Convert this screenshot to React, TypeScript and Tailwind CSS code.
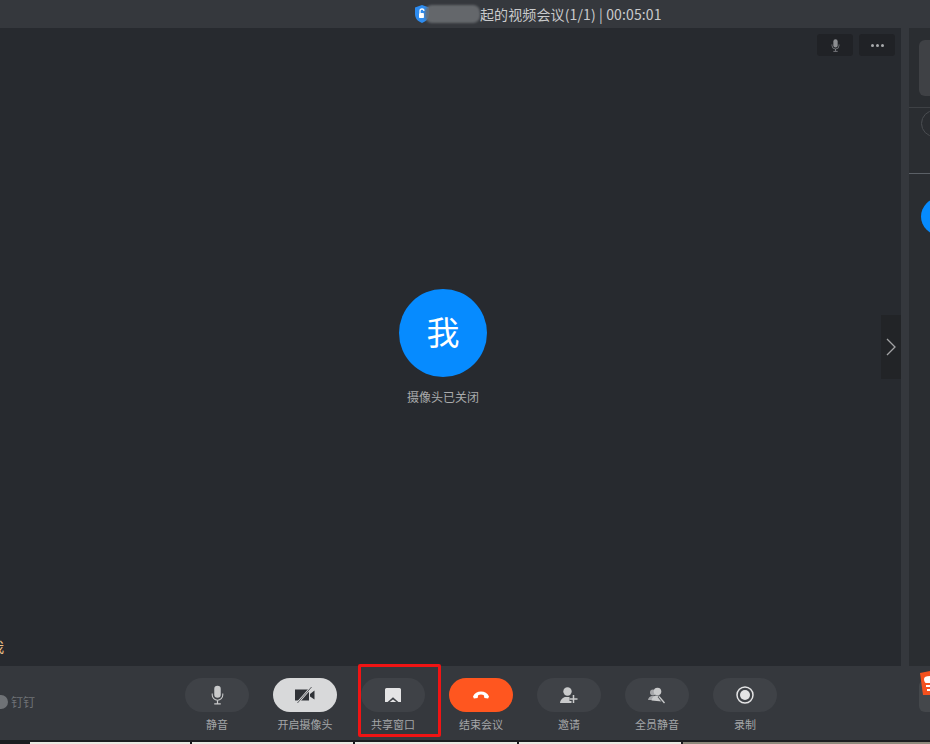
import type { ReactNode } from 'react';

const FONT = 'font-["Noto_Sans_CJK_SC","Liberation_Sans",sans-serif]';

function MicIcon({ className = '' }: { className?: string }) {
  return (
    <svg viewBox="0 0 16 24" className={className} fill="currentColor">
      <rect x="4" y="0.500" width="8" height="15" rx="4" />
      <path d="M1.500 10v2a6.500 6.500 0 0 0 13 0v-2" fill="none" stroke="currentColor" strokeWidth="1.300" />
      <path d="M8 18.500v3.500M4 22.800h8" fill="none" stroke="currentColor" strokeWidth="1.500" />
    </svg>
  );
}

const controls: { label: string; tone: 'dark' | 'light' | 'red'; icon: ReactNode }[] = [
  { label: '静音', tone: 'dark', icon: <MicIcon className="h-[20px] w-[13px]" /> },
  {
    label: '开启摄像头',
    tone: 'light',
    icon: (
      <svg viewBox="0 0 20 16" className="h-[16px] w-[20px]">
        <path fill="#2f3236" d="M0 2.500h14v11H0zM15 7l4.500-3.500v9L15 9.500z" />
        <path stroke="#d8d9da" strokeWidth="2.400" d="M2 16.500L17 -.5" />
        <path stroke="#5a5c60" strokeWidth="1" d="M2 16.500L17 -.5" />
      </svg>
    ),
  },
  {
    label: '共享窗口',
    tone: 'dark',
    icon: (
      <svg viewBox="0 0 16 14" className="h-[14px] w-[16px]">
        <path fill="#e4e4e5" d="M1.500 0h13A1.500 1.500 0 0 1 16 1.500V14h-2.600L8 9.200 2.600 14H0V1.500A1.500 1.500 0 0 1 1.500 0z" />
        <path fill="#e4e4e5" d="M8 11.400l3.200 2.600H4.800z" />
      </svg>
    ),
  },
  {
    label: '结束会议',
    tone: 'red',
    icon: (
      <svg viewBox="0 0 18 9" className="h-[8px] w-[18px]">
        <path fill="currentColor" d="M0 6.200C1.600 2.400 5 .5 9 .5s7.400 1.900 9 5.700L17 8.500l-4.200-.6-.6-3.200C11.200 4.200 10.100 4 9 4s-2.200.2-3.200.7l-.6 3.200L1 8.500z" />
      </svg>
    ),
  },
  {
    label: '邀请',
    tone: 'dark',
    icon: (
      <svg viewBox="0 0 18 17" className="h-[17px] w-[18px]">
        <circle cx="7.500" cy="4.500" r="4.200" fill="currentColor" />
        <path fill="currentColor" d="M0 16c.3-3.500 3-5.500 5-6h5c1 .3 1.600.8 2 1.300V16z" />
        <path stroke="#3f4247" strokeWidth="4" d="M13.500 7.500v9M9.500 12h8" />
        <path stroke="currentColor" strokeWidth="1.500" d="M13.500 8v8M9.500 12h8" />
      </svg>
    ),
  },
  {
    label: '全员静音',
    tone: 'dark',
    icon: (
      <svg viewBox="0 0 18 17" className="h-[17px] w-[18px]">
        <circle cx="5" cy="5.500" r="3" fill="currentColor" opacity="0.750" />
        <path fill="currentColor" opacity="0.750" d="M0 13c.3-2.500 2-3.500 3.500-4h3v4z" />
        <circle cx="9.500" cy="4.500" r="3.800" fill="currentColor" />
        <path fill="currentColor" d="M3.500 13.500c.4-3 2.600-4.500 4.200-5h3.500l2.800 2.500v3.500z" />
        <path stroke="#3f4247" strokeWidth="3.500" d="M11 9l6 7.500" />
        <path stroke="currentColor" strokeWidth="1.300" d="M11 9.500l5.500 6.500" />
      </svg>
    ),
  },
  {
    label: '录制',
    tone: 'dark',
    icon: (
      <svg viewBox="0 0 18 18" className="h-[18px] w-[18px]">
        <circle cx="9" cy="9" r="8" fill="none" stroke="#e4e4e5" strokeWidth="1.500" />
        <circle cx="9" cy="9" r="5" fill="#e4e4e5" />
      </svg>
    ),
  },
];

const toneClass = {
  dark: 'bg-[#3f4247] text-[#c9cacb]',
  light: 'bg-[#d8d9da]',
  red: 'bg-[#ff561f] text-white',
};

export default function App() {
  return (
    <div className={`${FONT} relative flex h-[744px] w-[930px] flex-col overflow-hidden bg-[#1b1d20]`}>
      {/* title bar */}
      <div className="flex h-[28px] shrink-0 items-center bg-[#35383d] pl-[415px]">
        <svg viewBox="0 0 14 18" className="h-[18px] w-[14px] shrink-0">
          <path fill="#2d8cf0" d="M7 0l7 2.500V9c0 4.500-3 7.500-7 9-4-1.500-7-4.500-7-9V2.500z" />
          <path fill="none" stroke="#fff" strokeWidth="1.300" d="M5 8V6a2 2 0 0 1 4 0" />
          <rect x="4" y="8" width="5" height="5" rx="0.800" fill="#fff" />
        </svg>
        <div className="-ml-[4px] h-[18px] w-[55px] shrink-0 rounded-[7px] bg-[#6a6d71] opacity-90 blur-[1px]" />
        <span className="whitespace-nowrap text-[14px] leading-none tracking-[0.12px] text-[#c9cacc]">起的视频会议(1/1) | 00:05:01</span>
      </div>

      {/* call area + side panel */}
      <div className="flex h-[638px] shrink-0">
        <main className="relative flex w-[901px] shrink-0 flex-col bg-[#272a2f]">
          <div className="flex justify-end gap-[6px] pr-[6px] pt-[6px]">
            <div className="flex h-[22px] w-[36px] items-center justify-center rounded-[3px] bg-[#202226] text-[#8c8e91]">
              <MicIcon className="h-[13px] w-[9px]" />
            </div>
            <div className="flex h-[22px] w-[36px] items-center justify-center gap-[2px] rounded-[3px] bg-[#202226]">
              <span className="size-[3px] rounded-full bg-[#a8aaac]" />
              <span className="size-[3px] rounded-full bg-[#a8aaac]" />
              <span className="size-[3px] rounded-full bg-[#a8aaac]" />
            </div>
          </div>

          <div className="flex w-[886px] flex-col items-center pt-[233px]">
            <div className="flex size-[88px] items-center justify-center rounded-full bg-[#068bff] pb-[4px] text-[33px] leading-none text-white">我</div>
            <span className="mt-[11px] text-[12px] leading-[17px] text-[#a9aaac]">摄像头已关闭</span>
          </div>

          <div className="absolute right-0 top-[287px] flex h-[64px] w-[20px] items-center justify-center bg-[#222427]">
            <svg viewBox="0 0 10 18" className="h-[18px] w-[10px] text-[#a2a3a5]">
              <path d="M1 1l8 8-8 8" fill="none" stroke="currentColor" strokeWidth="1.300" />
            </svg>
          </div>
          <span className="absolute -left-[10px] top-[609px] text-[14px] leading-[18px] text-[#f0c38a]">我</span>
        </main>

        <div className="w-[8px] shrink-0 bg-[#35383d]" />

        <aside className="flex flex-1 flex-col overflow-hidden bg-[#2a2d31] pt-[12px]">
          <div className="ml-[10px] h-[56px] shrink-0 rounded-l-[6px] bg-[#3f4145]" />
          <div className="mt-[11px] h-px shrink-0 bg-[#3e4145]" />
          <div className="ml-[12px] mt-[2px] size-[27px] shrink-0 rounded-full border border-[#4a4d51]" />
          <div className="mt-[36px] h-px shrink-0 bg-[#5b6066]" />
          <div className="ml-[12px] mt-[24px] size-[37px] shrink-0 rounded-full bg-[#068bff]" />
        </aside>
      </div>

      {/* toolbar */}
      <div className="relative flex h-[74px] shrink-0 justify-center gap-[24px] bg-[#35383d] pl-[32px] pt-[12px]">
        <div className="absolute left-0 top-[29px] flex items-center gap-[3px]">
          <span className="-ml-[6px] size-[14px] rounded-full bg-[#6f7276]" />
          <span className="text-[12px] leading-none text-[#6f7276]">钉钉</span>
        </div>

        {controls.map((c) => (
          <div key={c.label} className="flex w-[64px] flex-col items-center">
            <div className={`flex h-[34px] w-[64px] shrink-0 items-center justify-center rounded-full ${toneClass[c.tone]}`}>{c.icon}</div>
            <span className="mt-[2px] whitespace-nowrap text-[11px] leading-[20px] text-[#a4a6a8]">{c.label}</span>
          </div>
        ))}

        <div className="absolute right-0 top-[14px] h-[32px] w-[11px] rounded-l-[6px] bg-[#44474b]" />
        <svg viewBox="0 0 10 24" className="absolute right-0 top-[5px] h-[24px] w-[10px]">
          <path fill="#f4511e" d="M0 2l10-2v24H3z" />
          <path fill="#fff" d="M4 8c0-2 2-3 6-3v7H6c-1 0-2-2-2-4zM6 14h4v2H6zM7 18h3v2H7z" />
        </svg>

        {/* highlight drawn over the screenshot */}
        <div className="absolute left-[358px] top-[-2px] h-[73px] w-[83px] rounded-[2px] border-[3px] border-[#f01414]" />
      </div>

      {/* desktop peeking out under the window */}
      <div className="h-[2px] shrink-0 bg-[#1b1d20]" />
      <div className="flex h-[2px] shrink-0 gap-[2px] bg-[#1b1d20] pl-[30px]">
        <div className="w-[160px] bg-[#e9e9e2]" />
        <div className="w-[161px] bg-[#e9e9e2]" />
        <div className="w-[162px] bg-[#e9e9e2]" />
        <div className="w-[162px] bg-[#e9e9e2]" />
        <div className="flex-1 bg-[#8d8a7c]" />
      </div>
    </div>
  );
}
